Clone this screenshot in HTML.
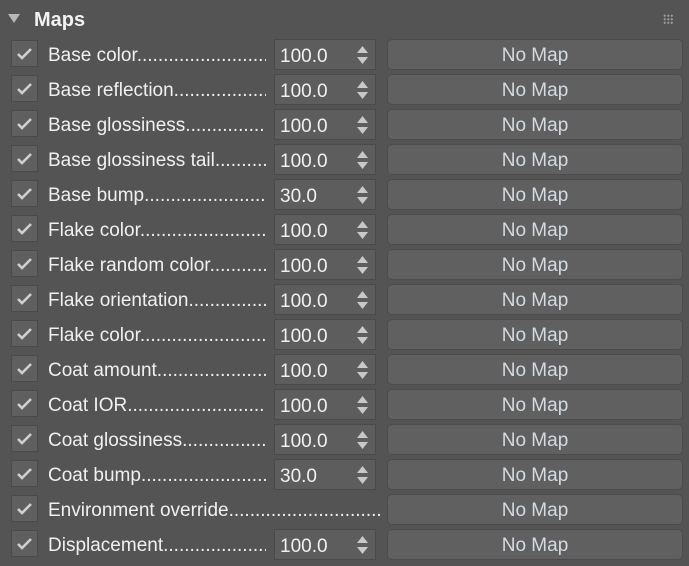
<!DOCTYPE html>
<html><head><style>
body{margin:0;width:689px;height:566px;background:#545454;font-family:"Liberation Sans",sans-serif;overflow:hidden;position:relative;color:#ececec}
.t{position:absolute;left:34px;top:9px;font-size:20px;font-weight:bold;color:#f2f2f2}
.tri{position:absolute;left:8px;top:14px;width:0;height:0;border-left:6px solid transparent;border-right:6px solid transparent;border-top:9px solid #b8b8b8}
.grip{position:absolute;left:663px;top:14px;width:10px;height:10px;background-image:radial-gradient(circle,#9a9a9a 1px,transparent 1.2px);background-size:3.5px 3.5px}
.row{position:absolute;left:0;height:33px;width:689px}
.cb{position:absolute;left:11px;top:1px;width:25px;height:25px;background:#5f5f5f;border:1px solid #4a4a4a}
.cb svg{position:absolute;left:4px;top:5px}
.lbl{position:absolute;left:48px;top:6px;font-size:19px;white-space:nowrap;overflow:hidden;width:218px;color:#f0f0f0}
.lbl.w{width:332px}
.sp{position:absolute;left:274px;top:0;width:102px;height:31px;background:#5d5d5d;border:1px solid #4a4a4a;box-sizing:border-box}
.sp span{position:absolute;left:5px;top:6px;font-size:19px;color:#f0f0f0}
.sp svg{position:absolute;right:7px;top:6px}
.btn{position:absolute;left:387px;top:0;width:296px;height:31px;background:#606060;border:1px solid #4c4c4c;border-radius:5px;box-sizing:border-box;text-align:center;font-size:19px;line-height:31px;color:#d4dae2}
</style></head><body>
<div class="tri"></div><div class="t">Maps</div><div class="grip"></div>
<div id="rows"></div>
<script>
var r=[["Base color","100.0"],["Base reflection","100.0"],["Base glossiness","100.0"],["Base glossiness tail","100.0"],["Base bump","30.0"],["Flake color","100.0"],["Flake random color","100.0"],["Flake orientation","100.0"],["Flake color","100.0"],["Coat amount","100.0"],["Coat IOR","100.0"],["Coat glossiness","100.0"],["Coat bump","30.0"],["Environment override",null],["Displacement","100.0"]];
var h="",d=".".repeat(80);
r.forEach(function(x,i){
h+='<div class="row" style="top:'+(39+35*i)+'px"><div class="cb"><svg width="17" height="15" viewBox="0 0 17 15"><path d="M2 8 L6 12 L15 3" fill="none" stroke="#cfcfcf" stroke-width="2.6"/></svg></div>';
h+='<div class="lbl'+(x[1]?'':' w')+'">'+x[0]+d+'</div>';
if(x[1])h+='<div class="sp"><span>'+x[1]+'</span><svg width="11" height="19" viewBox="0 0 11 19"><path d="M5.5 0 L11 7 L0 7Z M0 11 L11 11 L5.5 18Z" fill="#c8c8c8"/></svg></div>';
h+='<div class="btn">No Map</div></div>';
});
document.getElementById("rows").innerHTML=h;
</script>
</body></html>
